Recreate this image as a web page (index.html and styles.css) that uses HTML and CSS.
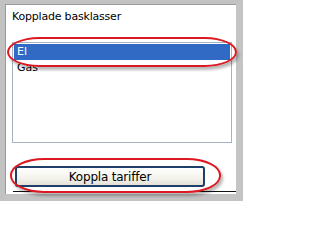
FILE: index.html
```html
<!DOCTYPE html>
<html>
<head>
<meta charset="utf-8">
<link rel="stylesheet" href="styles.css">
</head>
<body>
<div class="frame">
  <div class="panel">
    <div class="title">Kopplade basklasser</div>
    <div class="listbox">
      <div class="item selected">El</div>
      <div class="item">Gas</div>
    </div>
    <div class="btnrow"><button class="btn">Koppla tariffer</button></div>
    <div class="rule"></div>
  </div>
  <div class="mark mark-list"></div>
  <div class="mark mark-btn"></div>
</div>
</body>
</html>
```
FILE: styles.css
```css
html, body {
  margin: 0;
  padding: 0;
  background: #ffffff;
}
.frame {
  position: relative;
  width: 243px;
  height: 201px;
  box-sizing: border-box;
  background: #bfbfbf;
  border-top: 4px solid #c2c2c2;
  border-left: 5px solid #c2c2c2;
  border-right: 7px solid #c4c4c4;
  border-bottom: 7px solid #c4c4c4;
  font-family: "DejaVu Sans", Verdana, sans-serif;
  font-size: 11px;
  color: #000;
}
.panel {
  box-sizing: border-box;
  height: 190px;
  background: #ffffff;
  border-top: 1px solid #9a9a9a;
  border-left: 1px solid #9a9a9a;
  padding: 5px 0 0 6px;
  display: flex;
  flex-direction: column;
}
.title {
  line-height: 13px;
  height: 13px;
  letter-spacing: -0.2px;
}
.listbox {
  margin-top: 19px;
  width: 220px;
  height: 101px;
  box-sizing: border-box;
  border: 1px solid #a4b3c4;
  padding: 1px;
}
.item {
  height: 16px;
  line-height: 16px;
  padding-left: 3px;
}
.selected {
  background: #316ac5;
  color: #ffffff;
}
.btnrow {
  margin-top: 23px;
  padding-left: 3px;
  display: flex;
}
.btn {
  width: 190px;
  height: 21px;
  box-sizing: border-box;
  border: 2px solid #1f3e6a;
  border-radius: 3px;
  background: linear-gradient(#ffffff, #f3f2ec 60%, #e2e0d8);
  font-family: "DejaVu Sans", Verdana, sans-serif;
  font-size: 12px;
  color: #000;
  padding: 0;
  letter-spacing: -0.2px;
}
.rule {
  margin-top: 4px;
  margin-left: 1px;
  height: 0;
  border-top: 1px solid #111111;
}
.mark {
  position: absolute;
  box-sizing: border-box;
  border: 2px solid #dc1820;
  box-shadow: 2px 3px 3px rgba(0, 0, 0, 0.28);
}
.mark-list {
  left: 2px;
  top: 33px;
  width: 230px;
  height: 30px;
  border-radius: 32px / 15px;
}
.mark-btn {
  left: 5px;
  top: 154px;
  width: 211px;
  height: 35px;
  border-radius: 34px / 17px;
}
```
